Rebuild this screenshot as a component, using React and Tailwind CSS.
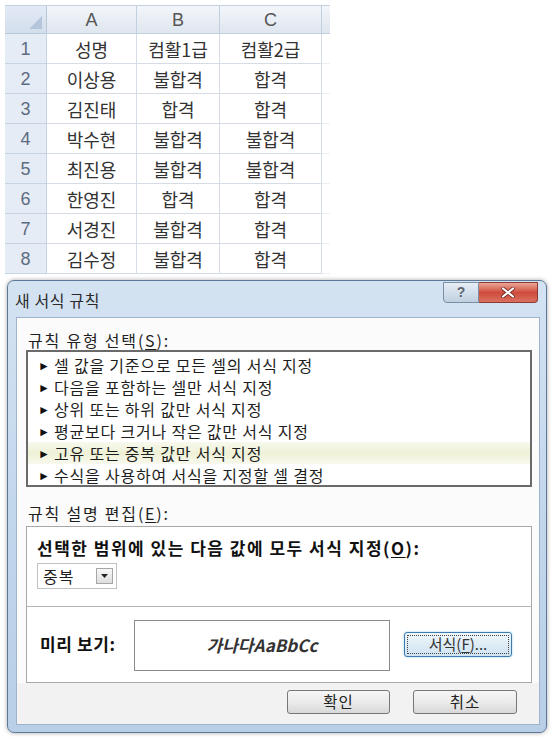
import React from "react";

const rows = [
  ["성명", "컴활1급", "컴활2급"],
  ["이상용", "불합격", "합격"],
  ["김진태", "합격", "합격"],
  ["박수현", "불합격", "불합격"],
  ["최진용", "불합격", "불합격"],
  ["한영진", "합격", "합격"],
  ["서경진", "불합격", "합격"],
  ["김수정", "불합격", "합격"],
];

const items = [
  "셀 값을 기준으로 모든 셀의 서식 지정",
  "다음을 포함하는 셀만 서식 지정",
  "상위 또는 하위 값만 서식 지정",
  "평균보다 크거나 작은 값만 서식 지정",
  "고유 또는 중복 값만 서식 지정",
  "수식을 사용하여 서식을 지정할 셀 결정",
];

function Sheet() {
  return (
    <div className="pt-[5px] pl-[5px]">
      <div className="grid grid-cols-[42px_90px_83px_102px_8px] w-max border-t border-[#c3d0e0] text-[18px] leading-none">
        <div className="h-[28px] bg-gradient-to-b from-[#e2eaf5] to-[#d3deec] border-r border-b border-[#b9c9dc] relative">
          <svg className="absolute right-[4px] bottom-[4px]" width="13" height="13" viewBox="0 0 13 13">
            <polygon points="13,0 13,13 0,13" fill="#b4c6dc" />
          </svg>
        </div>
        {["A", "B", "C"].map((c) => (
          <div
            key={c}
            className="h-[28px] bg-gradient-to-b from-[#f3f6fa] to-[#dfe6ef] border-r border-b border-[#c2cfdf] flex items-center justify-center text-[#555] text-[18px] font-['Liberation_Sans',sans-serif]"
          >
            {c}
          </div>
        ))}
        <div className="h-[28px] bg-gradient-to-b from-[#f3f6fa] to-[#dfe6ef] border-b border-[#c2cfdf]" />
        {rows.map((r, i) => (
          <React.Fragment key={i}>
            <div className="h-[30px] bg-[#e6ecf5] border-r border-b border-[#c6d3e3] flex items-center justify-center text-[#5d6b80] text-[18px] font-['Liberation_Sans',sans-serif]">
              {i + 1}
            </div>
            {r.map((t, j) => (
              <div
                key={j}
                className="h-[30px] border-r border-b border-[#d6dce5] flex items-center justify-center text-[#333] text-[18px] font-['Noto_Sans_CJK_KR',sans-serif]"
              >
                {t}
              </div>
            ))}
            <div className="h-[30px] border-b border-[#eef0f3]" />
          </React.Fragment>
        ))}
      </div>
    </div>
  );
}

function U({ children }) {
  return <span className="underline underline-offset-2">{children}</span>;
}

function Btn({ children, className = "" }) {
  return (
    <div
      className={
        "h-[24px] rounded-[3px] border border-[#777] bg-gradient-to-b from-[#f6f6f6] via-[#ebebeb] to-[#d8d8d8] flex items-center justify-center text-[15.5px] tracking-[1px] text-[#222] " +
        className
      }
    >
      {children}
    </div>
  );
}

function Dialog() {
  return (
    <div className="absolute left-[7px] top-[280px] w-[540px] h-[453px] rounded-[7px] border border-[#5d7898] bg-gradient-to-b from-[#d4e3f2] via-[#c3d7ec] to-[#b8cfe7] flex flex-col shadow-[0_0_4px_rgba(0,0,0,0.35)]">
      <div className="h-[36px] flex items-start">
        <span className="pl-[7px] pt-[7px] text-[16px] tracking-[0.6px] text-[#2a2a2a]">새 서식 규칙</span>
        <div className="ml-auto mr-[8px] mt-[1px] flex">
          <div className="w-[36px] h-[21px] rounded-bl-[4px] border border-[#7d8ea4] bg-gradient-to-b from-[#e6edf5] via-[#d3dfeb] to-[#c0cfe0] flex items-center justify-center text-[14px] font-bold text-[#5b6470] font-['Liberation_Sans',sans-serif]">
            ?
          </div>
          <div className="w-[59px] h-[21px] rounded-br-[4px] border border-l-0 border-[#8b3b33] bg-gradient-to-b from-[#e9a597] via-[#cf4b3c] to-[#d9705f] flex items-center justify-center">
            <svg width="14" height="11" viewBox="0 0 14 11">
              <path d="M2 1.5 L12 9.5 M12 1.5 L2 9.5" stroke="#6b2620" strokeWidth="3.6" strokeLinecap="round" />
              <path d="M2 1.5 L12 9.5 M12 1.5 L2 9.5" stroke="#ffffff" strokeWidth="2.2" strokeLinecap="round" />
            </svg>
          </div>
        </div>
      </div>
      <div className="ml-[8px] mr-[6px] h-[408px] border border-[#9fb4cc] bg-[#fbfbfb] flex flex-col text-[16px] text-[#1e1e1e]">
        <div className="pl-[11px] pt-[12px] leading-[20px] tracking-[1.8px]">
          규칙 유형 선택(<U>S</U>):
        </div>
        <div className="ml-[9px] w-[506px] h-[137px] border-2 border-[#6a6a6a] bg-white pt-[2px]">
          {items.map((t, i) => (
            <div
              key={i}
              className={
                "h-[22px] flex items-center pl-[10px] " +
                (i === 4 ? "bg-gradient-to-b from-[#f8f9ee] via-[#eef1d6] to-[#f8f9ee]" : "")
              }
            >
              <span className="text-[12px] text-[#111] w-[16px] leading-none">►</span>
              <span className="tracking-[0.8px]">{t}</span>
            </div>
          ))}
        </div>
        <div className="pl-[11px] mt-[16px] leading-[20px] tracking-[1.8px]">
          규칙 설명 편집(<U>E</U>):
        </div>
        <div className="ml-[9px] mt-[3px] w-[506px] h-[157px] border border-[#a8a8a8] bg-white flex flex-col">
          <div className="pl-[10px] pt-[11px] leading-[20px] font-bold text-[17px] tracking-[1.5px] text-[#111]">
            선택한 범위에 있는 다음 값에 모두 서식 지정(<U>O</U>):
          </div>
          <div className="ml-[10px] mt-[5px] w-[80px] h-[26px] border border-[#c2c2c2] flex items-center">
            <span className="pl-[5px] text-[16px] tracking-[1px]">중복</span>
            <div className="ml-auto mr-[3px] w-[17px] h-[16px] border border-[#a6a6a6] bg-gradient-to-b from-[#f7f7f7] to-[#dedede] flex items-center justify-center">
              <svg width="7" height="4" viewBox="0 0 7 4">
                <polygon points="0,0 7,0 3.5,4" fill="#222" />
              </svg>
            </div>
          </div>
          <div className="mt-[17px] border-t border-[#b3b3b3]" />
          <div className="flex items-center h-[74px]">
            <span className="pl-[13px] w-[107px] font-bold text-[17px] tracking-[0.6px] text-[#111]">미리 보기:</span>
            <div className="w-[256px] h-[51px] border border-[#8a8a8a] flex items-center justify-center mt-[2px]">
              <span className="italic font-bold text-[17px] text-[#333]">가나다AaBbCc</span>
            </div>
            <div className="ml-[14px] w-[108px] h-[25px] rounded-[3px] border border-[#3d7bad] bg-gradient-to-b from-[#eef6fb] to-[#cfe3f1] p-[2px] shadow-[0_0_2px_#7fc0e8]">
              <div className="w-full h-full border border-dotted border-[#444] flex items-center justify-center text-[15px] text-[#333]">
                서식(<U>F</U>)...
              </div>
            </div>
          </div>
        </div>
        <div className="flex-1 bg-[#f2f2f2] flex items-start justify-end pt-[7px] pr-[22px] gap-[23px]">
          <Btn className="w-[103px]">확인</Btn>
          <Btn className="w-[104px]">취소</Btn>
        </div>
      </div>
    </div>
  );
}

export default function App() {
  return (
    <div className="w-[551px] h-[737px] bg-white relative overflow-hidden font-['Noto_Sans_CJK_KR',sans-serif]">
      <Sheet />
      <Dialog />
    </div>
  );
}
